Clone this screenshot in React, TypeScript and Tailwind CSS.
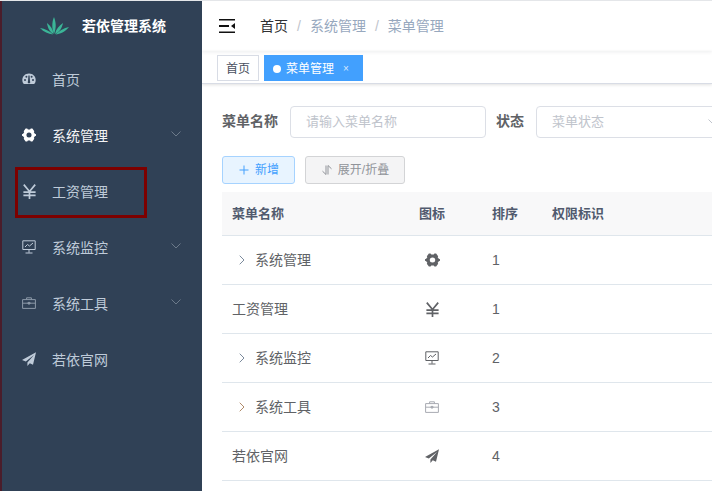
const font = '[font-family:"Liberation_Sans","Noto_Sans_CJK_SC",sans-serif]'

function GaugeIcon() {
  return (
    <svg width="14" height="14" viewBox="0 0 14 14" fill="currentColor">
      <path d="M7 1.500C3.200 1.500.3 4.400.3 8c0 1.400.4 2.600 1 3.600.2.3.5.4.8.4h9.800c.3 0 .6-.1.8-.4.6-1 1-2.200 1-3.600 0-3.600-2.900-6.500-6.700-6.500z" />
      <circle cx="3" cy="8" r="1" fill="#304156" />
      <circle cx="4.400" cy="4.800" r="1" fill="#304156" />
      <circle cx="9.600" cy="4.800" r="1" fill="#304156" />
      <circle cx="11" cy="8" r="1" fill="#304156" />
      <path d="M7.600 3.600 L8 9.200 A1.300 1.300 0 1 1 6 9.200 L6.400 3.600z" fill="#304156" />
    </svg>
  )
}

function GearIcon({ hole = '#304156' }: { hole?: string }) {
  return (
    <svg width="15" height="14" viewBox="1.700 0 11.600 14" preserveAspectRatio="none" fill="currentColor">
      <path d="M4.700.6h1.300l.6.8h1.800l.6-.8h1.300l1.600 2.700-.4 1 .9 1.400.9.500v1.600l-.9.500-.9 1.400.4 1-1.600 2.700H9.000l-.6-.8H6.600l-.6.800H4.700L3.100 10.700l.4-1-.9-1.400-.9-.5V6.200l.9-.5.9-1.400-.4-1z" />
      <ellipse cx="7.500" cy="7" rx="2.100" ry="2.500" fill={hole} />
    </svg>
  )
}

function YenIcon() {
  return (
    <svg width="13" height="15" viewBox="0 0 13 15" fill="none" stroke="currentColor" strokeWidth="1.700">
      <path d="M.8.600 6.500 7.500 12.200.600M6.500 7.500V15M.4 8.200h12.200M.4 11.400h12.200" />
    </svg>
  )
}

function MonitorIcon() {
  return (
    <svg width="14" height="14" viewBox="0 0 14 14" fill="none" stroke="currentColor" strokeWidth="1">
      <path d="M.8.800h12.400v8.700H.8zM7 9.500v3.200M3.500 13h7" />
      <path d="M3 7l2.500-2.500 2 1.500L11 3" />
    </svg>
  )
}

function CaseIcon() {
  return (
    <svg width="14" height="14" viewBox="0 0 14 14" fill="none" stroke="currentColor" strokeWidth="1">
      <path d="M.6 3.600h12.800v8.800H.6zM4.600 3.600V1.800h4.800v1.800M.6 7.200h12.800" />
      <path d="M6 6.400h2v1.600H6z" fill="currentColor" />
    </svg>
  )
}

function PlaneIcon() {
  return (
    <svg width="14" height="14" viewBox="0 0 14 14" fill="currentColor">
      <path d="M14 .2 0 8l3.800 1.600L12 3 5.400 10.600V14l2.400-2.800 3.200 1.500z" />
    </svg>
  )
}

function Chevron({ className }: { className: string }) {
  return (
    <svg className={className} width="10" height="6" viewBox="0 0 10 6" fill="none" stroke="currentColor" strokeWidth="1">
      <path d="M.5.500 5 5 9.500.500" />
    </svg>
  )
}

function RowArrow({ className }: { className: string }) {
  return (
    <svg className={className} width="6" height="10" viewBox="0 0 6 10" fill="none" stroke="currentColor" strokeWidth="1">
      <path d="M.7.700 5 5 .7 9.300" />
    </svg>
  )
}

const menu = [
  { label: '首页', icon: <GaugeIcon />, tone: 'text-[#bfcbd9]', iconTone: 'text-[#bfcbd9]' },
  { label: '系统管理', icon: <GearIcon />, sub: true, tone: 'text-[#f4f4f5]', iconTone: 'text-white' },
  { label: '工资管理', icon: <YenIcon />, tone: 'text-[#bfcbd9]', iconTone: 'text-[#bfcbd9]' },
  { label: '系统监控', icon: <MonitorIcon />, sub: true, tone: 'text-[#bfcbd9]', iconTone: 'text-[#bfcbd9]' },
  { label: '系统工具', icon: <CaseIcon />, sub: true, tone: 'text-[#bfcbd9]', iconTone: 'text-[#8c99a8]' },
  { label: '若依官网', icon: <PlaneIcon />, tone: 'text-[#bfcbd9]', iconTone: 'text-[#bfcbd9]' },
]

const rows = [
  { name: '系统管理', icon: <GearIcon hole="#ffffff" />, order: 1, child: true, iconTone: 'text-[#606266]' },
  { name: '工资管理', icon: <YenIcon />, order: 1, iconTone: 'text-[#606266]' },
  { name: '系统监控', icon: <MonitorIcon />, order: 2, child: true, iconTone: 'text-[#606266]' },
  { name: '系统工具', icon: <CaseIcon />, order: 3, child: true, iconTone: 'text-[#a8abb2]', arrow: 'text-[#b08a6a]' },
  { name: '若依官网', icon: <PlaneIcon />, order: 4, iconTone: 'text-[#606266]' },
]

export default function App() {
  return (
    <div className={`${font} relative flex h-[491px] w-[712px] overflow-hidden border-t border-t-[#e4e6e9] bg-white`}>
      <aside className="relative flex w-[202px] shrink-0 flex-col border-l-2 border-l-[#4a1d2b] bg-[#304156]">
        <div className="flex h-[51px] items-center gap-[13px] pb-[2px] pl-[38px]">
          <svg width="29" height="18" viewBox="0 0 29 18" fill="#3bb597">
            <path d="M14 0C11.500 6 12 12 14 17 16.500 11 16 5 14 0z" />
            <path d="M7 6C7.500 11 10 15 13.500 17 13 12 10.500 9 7 6z" />
            <path d="M23 6C22 11 19.500 15 15 17 16 12 19 9 23 6z" />
            <path d="M0 11C4 15 8 17 13 17.500 9.500 14 5 11.500 0 11z" />
            <path d="M29 10C25 15 20 17 15.500 17.500 19 14 24 11 29 10z" />
          </svg>
          <span className="text-sm font-bold text-white">若依管理系统</span>
        </div>
        {menu.map((item) => (
          <div key={item.label} className="flex h-14 items-center pl-[20px] pr-[21px]">
            <span className={`mr-4 flex w-[14px] -translate-y-px justify-center ${item.iconTone}`}>{item.icon}</span>
            <span className={`text-sm ${item.tone}`}>{item.label}</span>
            {item.sub && <Chevron className="ml-auto -translate-y-0.5 text-[#6c7a8a]" />}
          </div>
        ))}
      </aside>

      <div className="absolute left-[15px] top-[166px] h-[51px] w-[132px] border-[3px] border-[#7d0000]" />

      <main className="flex min-w-0 flex-1 flex-col">
        <header className="flex h-[50px] shrink-0 items-center pl-[17px] shadow-[0_1px_4px_rgba(0,21,41,0.08)]">
          <svg width="16" height="14" viewBox="0 0 16 14" fill="#111">
            <path d="M0 0h16v1.500H0zM0 6h10v2H0zM0 12.500h16V14H0zM16 4v6L12 7z" />
          </svg>
          <nav className="ml-[25px] flex items-center text-sm">
            <span className="text-[#303133]">首页</span>
            <span className="mx-[9px] text-[#c0c4cc]">/</span>
            <span className="text-[#97a8be]">系统管理</span>
            <span className="mx-[9px] text-[#c0c4cc]">/</span>
            <span className="text-[#97a8be]">菜单管理</span>
          </nav>
        </header>

        <div className="flex h-[33px] shrink-0 items-start gap-[5px] border-b border-b-[#d8dce5] pl-[15px] pt-[4px] shadow-[0_1px_3px_rgba(0,0,0,0.12)]">
          <span className="flex h-[26px] w-[42px] items-center justify-center border border-[#d8dce5] pt-px text-xs text-[#495060]">首页</span>
          <span className="flex h-[26px] w-[99px] items-center border border-[#42a0fe] bg-[#42a0fe] pl-[8px] pt-px text-xs text-white">
            <span className="mr-[5px] size-2 rounded-full bg-white" />
            菜单管理
            <span className="ml-[9px] text-[10px] leading-none text-[#d5e8ff]">×</span>
          </span>
        </div>

        <div className="flex flex-col pl-[20px] pt-[22px]">
          <form className="flex h-[32px] w-[700px] items-center">
            <label className="pb-[2px] text-sm font-bold text-[#606266]">菜单名称</label>
            <div className="ml-[12px] flex h-[32px] w-[196px] items-center rounded border border-[#dcdfe6] pl-[15px] text-[13px] text-[#c0c4cc]">请输入菜单名称</div>
            <label className="ml-[10px] pb-[2px] text-sm font-bold text-[#606266]">状态</label>
            <div className="ml-[12px] flex h-[32px] w-[200px] items-center justify-between rounded border border-[#dcdfe6] pl-[15px] pr-[17px] text-[13px] text-[#c0c4cc]">
              菜单状态
              <Chevron className="text-[#c0c4cc]" />
            </div>
          </form>

          <div className="mt-[18px] flex gap-[10px]">
            <button className="flex h-[28px] w-[73px] items-center justify-center gap-[5px] rounded-[3px] border border-[#a6d3ff] bg-[#e8f4ff] text-xs text-[#42a0fe]">
              <svg width="12" height="12" viewBox="0 0 12 12" stroke="currentColor" strokeWidth="1">
                <path d="M6 1.500v9M1.500 6h9" />
              </svg>
              新增
            </button>
            <button className="flex h-[28px] w-[100px] items-center justify-center gap-[5px] rounded-[3px] border border-[#d3d4d6] bg-[#f4f4f5] text-xs text-[#909399]">
              <svg width="12" height="12" viewBox="0 0 12 12" fill="none" stroke="currentColor" strokeWidth="1">
                <path d="M5 1.500v9L1.500 7.200M7 10.500v-9L10.500 4.800" />
              </svg>
              展开/折叠
            </button>
          </div>

          <div className="mt-[8px] w-[700px]">
            <div className="grid h-[44px] grid-cols-[187px_73px_60px_1fr] items-center border-b border-b-[#dfe6ec] bg-[#f8f8f9] text-[13px] font-bold text-[#515a6e]">
              <span className="pl-[10px]">菜单名称</span>
              <span className="pl-[10px]">图标</span>
              <span className="pl-[10px]">排序</span>
              <span className="pl-[10px]">权限标识</span>
            </div>
            {rows.map((row) => (
              <div key={row.name} className="grid h-[49px] grid-cols-[187px_73px_60px_1fr] items-center border-b border-b-[#dfe6ec] text-sm text-[#606266]">
                <span className="flex items-center pl-[10px]">
                  {row.child && <RowArrow className={`ml-[7px] mr-[10px] ${row.arrow ?? 'text-[#7b8a9c]'}`} />}
                  {row.name}
                </span>
                <span className={`flex w-[46px] justify-center ${row.iconTone}`}>{row.icon}</span>
                <span className="pl-[10px]">{row.order}</span>
                <span />
              </div>
            ))}
          </div>
        </div>
      </main>
    </div>
  )
}
